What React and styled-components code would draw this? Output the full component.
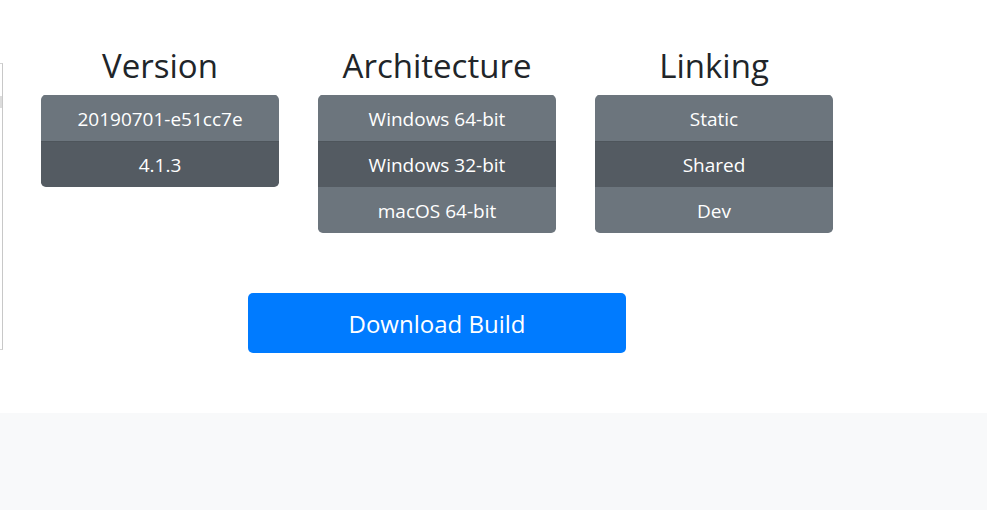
import styled, { createGlobalStyle } from "styled-components";

const GlobalStyle = createGlobalStyle`
  body {
    margin: 0;
    background: #fff;
    font-family: "Open Sans", "Noto Sans", sans-serif;
    color: #212529;
  }
`;

const groups = [
  { title: "Version", options: ["20190701-e51cc7e", "4.1.3"], active: 1 },
  {
    title: "Architecture",
    options: ["Windows 64-bit", "Windows 32-bit", "macOS 64-bit"],
    active: 1,
  },
  { title: "Linking", options: ["Static", "Shared", "Dev"], active: 1 },
];

function App() {
  return (
    <Page>
      <GlobalStyle />
      <Main>
        <SideFrame>
          <FrameThumb />
        </SideFrame>
        <Content>
          <Selectors>
            {groups.map((group) => (
              <Group key={group.title}>
                <GroupTitle>{group.title}</GroupTitle>
                <OptionStack>
                  {group.options.map((option, i) => (
                    <Option key={option} $active={i === group.active}>
                      {option}
                    </Option>
                  ))}
                </OptionStack>
              </Group>
            ))}
          </Selectors>
          <ButtonRow>
            <DownloadButton>Download Build</DownloadButton>
          </ButtonRow>
        </Content>
      </Main>
      <Footer />
    </Page>
  );
}
export default App;

const Page = styled.div`
  display: flex;
  flex-direction: column;
  min-height: 510px;
`;

const Main = styled.div`
  display: flex;
  align-items: flex-start;
`;

const SideFrame = styled.div`
  box-sizing: border-box;
  width: 3px;
  height: 287px;
  margin-top: 63px;
  border-top: 1px solid #d4d4d4;
  border-bottom: 1px solid #d4d4d4;
  border-right: 1px solid #c8c8c8;
  padding-top: 32px;
`;

const FrameThumb = styled.div`
  width: 2px;
  height: 12px;
  background: #dcdcdc;
`;

const Content = styled.div`
  padding-left: 38px;
  padding-top: 45px;
`;

const Selectors = styled.div`
  display: grid;
  grid-template-columns: repeat(3, 238px);
  column-gap: 39px;
  align-items: start;
`;

const Group = styled.div`
  display: flex;
  flex-direction: column;
  align-items: stretch;
`;

const GroupTitle = styled.h2`
  margin: 0 0 9px;
  font-size: 33px;
  font-weight: 400;
  line-height: 41px;
  text-align: center;
  color: #212529;
`;

const OptionStack = styled.div`
  display: flex;
  flex-direction: column;
  border-radius: 4.8px;
  overflow: hidden;
`;

const Option = styled.div`
  box-sizing: border-box;
  height: 46px;
  padding-top: 1px;
  display: flex;
  align-items: center;
  justify-content: center;
  font-size: 19px;
  color: #fff;
  background: ${(p) => (p.$active ? "#545b62" : "#6c757d")};
  border-top: 1px solid ${(p) => (p.$active ? "#4e555b" : "#6c757d")};

  &:first-child {
    border-top-color: #6c757d;
  }
`;

const ButtonRow = styled.div`
  display: flex;
  padding-left: 207px;
  margin-top: 60px;
`;

const DownloadButton = styled.button`
  width: 378px;
  height: 60px;
  padding-top: 2px;
  border: none;
  border-radius: 5px;
  background: #007bff;
  color: #fff;
  font-family: "Open Sans", "Noto Sans", sans-serif;
  font-size: 24px;
  cursor: pointer;
`;

const Footer = styled.div`
  margin-top: 60px;
  flex: 1;
  min-height: 98px;
  background: #f8f9fa;
`;
